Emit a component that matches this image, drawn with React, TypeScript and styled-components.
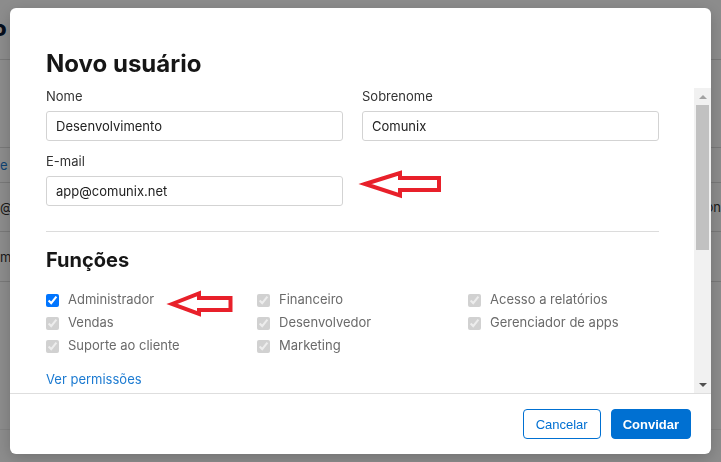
import React from "react";
import styled, { createGlobalStyle } from "styled-components";

const GlobalStyle = createGlobalStyle`
  html, body {
    margin: 0;
    padding: 0;
    height: 100%;
    overflow: hidden;
  }
  body {
    font-family: Inter, "Noto Sans", sans-serif;
    background: #ffffff;
  }
  #root {
    height: 100%;
  }
`;

const roles = [
  { label: "Administrador", checked: true, disabled: false },
  { label: "Financeiro", checked: true, disabled: true },
  { label: "Acesso a relatórios", checked: true, disabled: true },
  { label: "Vendas", checked: true, disabled: true },
  { label: "Desenvolvedor", checked: true, disabled: true },
  { label: "Gerenciador de apps", checked: true, disabled: true },
  { label: "Suporte ao cliente", checked: true, disabled: true },
  { label: "Marketing", checked: true, disabled: true },
];

export default function App() {
  return (
    <>
      <GlobalStyle />
      <Page>
        <TopBar>
          <Logo>o</Logo>
        </TopBar>
        <Row $height={88} />
        <Row $height={35}>
          <CellText $link>e</CellText>
        </Row>
        <Row $height={49}>
          <CellText>@s</CellText>
          <CellText>on</CellText>
        </Row>
        <Row $height={50}>
          <CellText>mi</CellText>
        </Row>
        <Row $height={148} $light />
      </Page>

      <Overlay>
        <Modal>
          <Header>
            <Title>Novo usuário</Title>
          </Header>

          <BodyWrap>
            <Body>
              <FieldGrid>
                <Field>
                  <Label>Nome</Label>
                  <Input defaultValue="Desenvolvimento" />
                </Field>
                <Field>
                  <Label>Sobrenome</Label>
                  <Input defaultValue="Comunix" />
                </Field>
                <Field>
                  <Label>E-mail</Label>
                  <Input defaultValue="app@comunix.net" />
                </Field>
              </FieldGrid>

              <Divider />

              <SectionTitle>Funções</SectionTitle>
              <RoleGrid>
                {roles.map((r) => (
                  <Role key={r.label}>
                    <Check type="checkbox" defaultChecked={r.checked} disabled={r.disabled} />
                    {r.label}
                  </Role>
                ))}
              </RoleGrid>
              <PermLink href="#">Ver permissões</PermLink>
            </Body>

            <ScrollBar>
              <ScrollButton>
                <ArrowUp />
              </ScrollButton>
              <Track>
                <Thumb />
              </Track>
              <ScrollButton>
                <ArrowDown />
              </ScrollButton>
            </ScrollBar>
          </BodyWrap>

          <Footer>
            <Button>Cancelar</Button>
            <Button $primary>Convidar</Button>
          </Footer>

          <Annotations width="701" height="446" viewBox="0 0 701 446">
            <polygon points="355,176 390,165 390,170 429,170 429,182 390,182 390,187.5" />
            <polygon points="162,296 189,285.5 189,290 220.5,290 220.5,302 189,302 189,306" />
          </Annotations>
        </Modal>
      </Overlay>
    </>
  );
}

// background page

const Page = styled.div`
  height: 100%;
  background: #ffffff;
`;

const TopBar = styled.header`
  height: 60px;
  box-sizing: border-box;
  border-bottom: 1px solid #dcdcdc;
  display: flex;
  align-items: center;
`;

const Logo = styled.span`
  margin-left: -7px;
  margin-top: -4px;
  font-size: 22px;
  font-weight: 800;
  color: #0b1a36;
`;

const Row = styled.div<{ $height: number; $light?: boolean }>`
  height: ${(p) => p.$height}px;
  box-sizing: border-box;
  border-bottom: 1px solid ${(p) => (p.$light ? "#eeeeee" : "#dcdcdc")};
  display: flex;
  align-items: center;
  justify-content: space-between;
`;

const CellText = styled.span<{ $link?: boolean }>`
  font-size: 13px;
  color: ${(p) => (p.$link ? "#1b7ad1" : "#333333")};
`;

// modal

const Overlay = styled.div`
  position: fixed;
  inset: 0;
  background: rgba(0, 0, 0, 0.45);
  display: flex;
  align-items: center;
  justify-content: center;
`;

const Modal = styled.div`
  position: relative;
  width: 701px;
  height: 446px;
  background: #ffffff;
  border-radius: 6px;
  overflow: hidden;
  display: flex;
  flex-direction: column;
  box-shadow: 0 4px 16px rgba(0, 0, 0, 0.2);
`;

const Header = styled.div`
  padding: 41px 36px 10px;
`;

const Title = styled.h2`
  margin: 0;
  font-size: 24px;
  font-weight: 700;
  line-height: normal;
  color: #161616;
`;

const BodyWrap = styled.div`
  flex: 1;
  min-height: 0;
  display: flex;
`;

const Body = styled.div`
  flex: 1;
  min-width: 0;
  overflow: hidden;
  padding: 0 35px 0 36px;
`;

const ScrollBar = styled.div`
  width: 17px;
  flex-shrink: 0;
  background: #f1f1f1;
  display: flex;
  flex-direction: column;
`;

const ScrollButton = styled.div`
  height: 17px;
  display: flex;
  align-items: center;
  justify-content: center;
`;

const ArrowUp = styled.span`
  width: 0;
  height: 0;
  border-left: 4px solid transparent;
  border-right: 4px solid transparent;
  border-bottom: 4px solid #a3a3a3;
`;

const ArrowDown = styled.span`
  width: 0;
  height: 0;
  border-left: 4px solid transparent;
  border-right: 4px solid transparent;
  border-top: 4px solid #505050;
`;

const Track = styled.div`
  flex: 1;
  padding: 0 2px;
`;

const Thumb = styled.div`
  height: 145px;
  background: #c1c1c1;
`;

const FieldGrid = styled.div`
  display: grid;
  grid-template-columns: 1fr 1fr;
  column-gap: 19px;
  row-gap: 12px;
`;

const Field = styled.div`
  display: flex;
  flex-direction: column;
`;

const Label = styled.label`
  font-size: 13px;
  line-height: 16px;
  color: #333333;
  margin-bottom: 7px;
`;

const Input = styled.input`
  height: 30px;
  box-sizing: border-box;
  border: 1px solid #d3d3d3;
  border-radius: 3px;
  padding: 0 9px;
  font-family: Inter, "Noto Sans", sans-serif;
  font-size: 13px;
  color: #222222;
  outline: none;
`;

const Divider = styled.hr`
  border: 0;
  border-top: 1px solid #dcdcdc;
  margin: 25px 0 16px;
`;

const SectionTitle = styled.h3`
  margin: 0;
  font-size: 20px;
  font-weight: 700;
  line-height: normal;
  color: #161616;
`;

const RoleGrid = styled.div`
  margin-top: 17px;
  display: grid;
  grid-template-columns: repeat(3, 211px);
  grid-auto-rows: 23px;
`;

const Role = styled.label`
  display: flex;
  align-items: flex-start;
  gap: 9px;
  padding-top: 2px;
  font-size: 13px;
  line-height: 16px;
  color: #6a6a6a;
`;

const Check = styled.input`
  margin: 3px 0 0;
  width: 13px;
  height: 13px;
  flex-shrink: 0;
`;

const PermLink = styled.a`
  display: inline-block;
  margin-top: 13px;
  font-size: 13px;
  line-height: 16px;
  color: #1b7ad1;
  text-decoration: none;
`;

const Footer = styled.div`
  border-top: 1px solid #dedede;
  padding: 15px 20px 15px;
  display: flex;
  justify-content: flex-end;
  gap: 10px;
`;

const Button = styled.button<{ $primary?: boolean }>`
  height: 30px;
  box-sizing: border-box;
  padding: 0 ${(p) => (p.$primary ? "11px" : "12px")};
  border-radius: 4px;
  border: 1px solid #0070d2;
  background: ${(p) => (p.$primary ? "#0070d2" : "#ffffff")};
  color: ${(p) => (p.$primary ? "#ffffff" : "#0070d2")};
  font-family: "Liberation Sans", Arial, sans-serif;
  font-size: 13px;
  font-weight: ${(p) => (p.$primary ? 700 : 400)};
  cursor: pointer;
`;

const Annotations = styled.svg`
  position: absolute;
  left: 0;
  top: 0;
  pointer-events: none;

  polygon {
    fill: none;
    stroke: #e8202a;
    stroke-width: 4;
    stroke-linejoin: miter;
  }
`;
